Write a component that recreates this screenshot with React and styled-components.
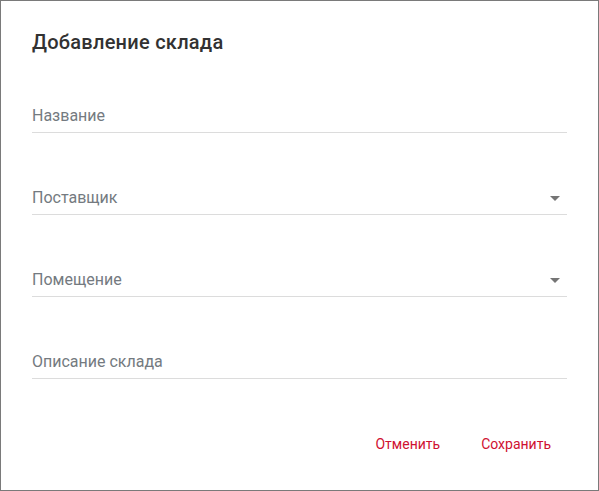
import styled, { createGlobalStyle } from 'styled-components';

const GlobalStyle = createGlobalStyle`
  html, body {
    margin: 0;
    padding: 0;
    background: #fff;
    font-family: Roboto, "Liberation Sans", sans-serif;
  }
`;

const Dialog = styled.div`
  box-sizing: border-box;
  width: 599px;
  height: 491px;
  border: 1px solid #7a7a7a;
  padding: 26px 31px 0 31px;
  display: flex;
  flex-direction: column;
`;

const Title = styled.h2`
  margin: 0;
  font-size: 20px;
  font-weight: 500;
  line-height: 30px;
  letter-spacing: 0.25px;
  color: #323232;
`;

const Field = styled.div`
  padding-top: ${p => (p.first ? 49 : 55)}px;
`;

const FieldRow = styled.div`
  display: flex;
  align-items: center;
  justify-content: space-between;
  padding-bottom: 6px;
  border-bottom: 1px solid #dcdcdc;
`;

const Label = styled.span`
  font-size: 16px;
  line-height: 20px;
  color: #747a80;
`;

const Arrow = styled.span`
  width: 0;
  height: 0;
  margin-right: 7px;
  border-left: 5px solid transparent;
  border-right: 5px solid transparent;
  border-top: 5px solid #757575;
`;

const Actions = styled.div`
  display: flex;
  justify-content: flex-end;
  gap: 9px;
  margin-top: 47px;
`;

const Button = styled.button`
  background: none;
  border: none;
  padding: 8px 16px;
  font-family: Roboto, "Liberation Sans", sans-serif;
  font-size: 14px;
  line-height: 20px;
  color: #cf1131;
  cursor: pointer;
`;

const fields = [
  { label: 'Название' },
  { label: 'Поставщик', select: true },
  { label: 'Помещение', select: true },
  { label: 'Описание склада' },
];

export default function App() {
  return (
    <>
      <GlobalStyle />
      <Dialog>
        <Title>Добавление склада</Title>
        {fields.map((f, i) => (
          <Field key={f.label} first={i === 0}>
            <FieldRow>
              <Label>{f.label}</Label>
              {f.select && <Arrow />}
            </FieldRow>
          </Field>
        ))}
        <Actions>
          <Button>Отменить</Button>
          <Button>Сохранить</Button>
        </Actions>
      </Dialog>
    </>
  );
}
